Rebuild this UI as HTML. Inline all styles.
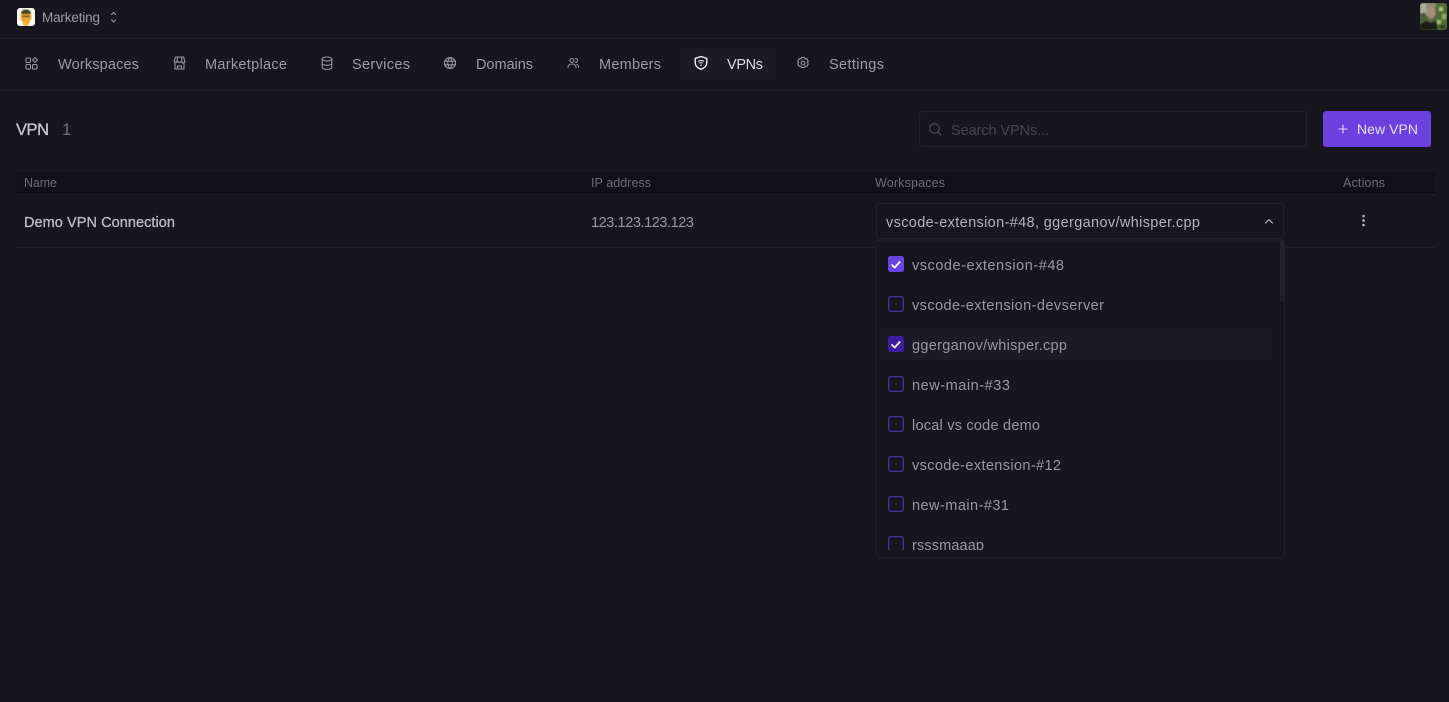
<!DOCTYPE html>
<html lang="en"><head><meta charset="utf-8"><title>VPNs</title>
<style>
html,body{margin:0;padding:0;width:1449px;height:702px;overflow:hidden;background:#17161f}
svg{display:block}
text{font-family:"Liberation Sans",sans-serif}
.nav{font-size:14.500px;fill:#9c9ca2}
.th{font-size:12.500px;fill:#6c6c72}
.it{font-size:14.500px;fill:#98989e}
.ic{fill:none;stroke:#96969c;stroke-width:1.100;stroke-linecap:round;stroke-linejoin:round}
.cb{fill:none;stroke:#4a3299;stroke-width:1.300}
</style></head><body>
<svg width="1449" height="702" viewBox="0 0 1449 702" xmlns="http://www.w3.org/2000/svg">
<defs>
<clipPath id="list"><rect x="877" y="241" width="406" height="309"/></clipPath>
<clipPath id="av"><rect x="1420" y="3" width="27" height="27" rx="3"/></clipPath>
<clipPath id="lg"><rect x="17" y="8" width="18" height="18" rx="3"/></clipPath>
<filter id="b"><feGaussianBlur stdDeviation=".8"/></filter>
<filter id="s"><feGaussianBlur stdDeviation=".4"/></filter>
</defs>
<rect width="1449" height="702" fill="#17161f"/>
<rect y="38" width="1449" height="1" fill="#212029"/>
<rect y="90" width="1449" height="1" fill="#212029"/>

<!-- org logo -->
<g clip-path="url(#lg)">
<rect x="17" y="8" width="18" height="18" fill="#fbfaf5"/>
<g filter="url(#s)">
<ellipse cx="26" cy="17" rx="5.500" ry="6" fill="#e9a62e"/>
<path d="M22 22h8l-2 4h-4z" fill="#eeb23f"/>
<path d="M21 14c0-3 2-4.500 5-4.500s5 1.500 5 4.500z" fill="#3d4a24"/>
<rect x="22.500" y="15.500" width="7" height="1.500" fill="#4a3a1c"/>
</g></g>
<text x="42" y="22" font-size="13.500" fill="#9c9ca2" textLength="58" lengthAdjust="spacing">Marketing</text>
<path class="ic" d="M111.500 14.500L113.500 12.500L115.500 14.500M111.500 20L113.500 22L115.500 20"/>

<!-- avatar -->
<g clip-path="url(#av)">
<rect x="1420" y="3" width="27" height="27" fill="#56683f"/>
<g filter="url(#b)">
<rect x="1420" y="3" width="7" height="12" fill="#a7ab9c"/>
<rect x="1420" y="13" width="6" height="8" fill="#4e5a3c"/>
<rect x="1436" y="3" width="11" height="27" fill="#4f6a30"/>
<rect x="1439" y="7" width="4" height="4" fill="#b1c084"/>
<rect x="1442" y="14" width="4" height="5" fill="#98ad68"/>
<rect x="1437" y="20" width="4" height="4" fill="#a4b57a"/>
<rect x="1440" y="25" width="5" height="4" fill="#2e3d1c"/>
<ellipse cx="1431" cy="12" rx="4.500" ry="7" fill="#a38e78"/>
<rect x="1426" y="3" width="10" height="4" fill="#8d8a78"/>
<path d="M1420 30v-6l6-3 5 2 5-2 2 9z" fill="#1b1d18"/>
</g></g>

<!-- nav icons -->
<g class="ic">
<rect x="26" y="58" width="4.500" height="4.500" rx="1"/><path d="M35 57.500l2.500 2.500-2.500 2.500-2.500-2.500z"/><rect x="26" y="64.500" width="4.500" height="4.500" rx="1"/><rect x="32.500" y="64.500" width="4.500" height="4.500" rx="1"/>
<path d="M175 63v6h9v-6M174 61.500l1.500-4.500h8l1.500 4.500a1.900 1.900 0 0 1-3.700 0 1.900 1.900 0 0 1-3.300 0 1.900 1.900 0 0 1-3.300 0A1.900 1.900 0 0 1 174 61.500zM177.500 57l-.5 4.500M181.500 57l.5 4.500M177.500 69v-3h4v3"/>
<ellipse cx="327" cy="59" rx="4.800" ry="2"/><path d="M322.200 59v8.500c0 1.100 2.200 2 4.800 2s4.800-.9 4.800-2V59M322.200 63.300c0 1.100 2.200 2 4.800 2s4.800-.9 4.800-2"/>
<circle cx="450" cy="63" r="5.500"/><path d="M444.500 61.200h11M444.500 64.800h11M450 57.500c-3 3.500-3 7.500 0 11M450 57.500c3 3.500 3 7.500 0 11"/>
<circle cx="572" cy="60.500" r="2"/><path d="M568 67.500c0-2.200 1.800-3.500 4-3.500s4 1.300 4 3.500M575.500 58.500a2 2 0 0 1 0 4M577 64.300c1 .6 1.500 1.800 1.500 3"/>
<circle cx="803" cy="63" r="1.800"/><path d="M801.500 57.500h3l.6 1.500 1.700-.3 1.500 2.500-1 1.300 1 1.300-1.500 2.500-1.700-.3-.6 1.500h-3l-.6-1.500-1.700.3-1.500-2.500 1-1.300-1-1.300 1.500-2.500 1.700.3z"/>
</g>

<rect x="680" y="48" width="96" height="32" rx="3" fill="#1b1a25"/>
<path d="M701 56.500l5.800 1.900v4.300c0 3.200-2.600 5.300-5.800 6.600-3.200-1.300-5.800-3.400-5.800-6.600v-4.300z" fill="none" stroke="#f0f0f2" stroke-width="1.400" stroke-linejoin="round"/>
<path d="M698 61.500c1.700-1.400 4.300-1.400 6 0M699.400 63.300c1-.7 2.200-.7 3.200 0" fill="none" stroke="#f0f0f2" stroke-width="1"/>
<circle cx="701" cy="65.300" r=".8" fill="#f0f0f2"/>

<text class="nav" x="58" y="69" textLength="81" lengthAdjust="spacing">Workspaces</text>
<text class="nav" x="205" y="69" textLength="82" lengthAdjust="spacing">Marketplace</text>
<text class="nav" x="352" y="69" textLength="58" lengthAdjust="spacing">Services</text>
<text class="nav" x="476" y="69" textLength="57" lengthAdjust="spacing">Domains</text>
<text class="nav" x="599" y="69" textLength="62" lengthAdjust="spacing">Members</text>
<text class="nav" x="727" y="69" textLength="36" lengthAdjust="spacing" style="fill:#dedee2">VPNs</text>
<text class="nav" x="829" y="69" textLength="55" lengthAdjust="spacing">Settings</text>

<!-- title row -->
<text x="16" y="135" font-size="16.500" fill="#c8c8cd" stroke="#c8c8cd" stroke-width=".3" textLength="33" lengthAdjust="spacing">VPN</text>
<text x="62" y="135" font-size="17" fill="#6e6e74">1</text>

<rect x="919.500" y="111.500" width="387" height="35" rx="3" fill="#17161f" stroke="#22212a"/>
<circle cx="934.500" cy="128.500" r="4.800" fill="none" stroke="#505056" stroke-width="1.100"/>
<path d="M938 132l3 3" stroke="#505056" stroke-width="1.100" stroke-linecap="round"/>
<text x="951" y="135" font-size="14.500" fill="#45454b" textLength="98" lengthAdjust="spacing">Search VPNs...</text>

<rect x="1323" y="111" width="108" height="36" rx="3" fill="#6c41e0"/>
<path d="M1343 124.500v9M1338.500 129h9" stroke="#ddd5f7" stroke-width="1.100"/>
<text x="1357" y="134" font-size="14" fill="#e6e0f9" textLength="61" lengthAdjust="spacing">New VPN</text>

<!-- table head -->
<rect x="16" y="172" width="1419" height="22" fill="#111017"/>
<rect x="16" y="194" width="1419" height="1" fill="#22212a"/>
<text class="th" x="24" y="187" textLength="33" lengthAdjust="spacing">Name</text>
<text class="th" x="591" y="187" textLength="60" lengthAdjust="spacing">IP address</text>
<text class="th" x="875" y="187" textLength="70" lengthAdjust="spacing">Workspaces</text>
<text class="th" x="1343" y="187" textLength="42" lengthAdjust="spacing">Actions</text>

<!-- row -->
<text x="24" y="227" font-size="14.500" fill="#bdbdc2" stroke="#bdbdc2" stroke-width=".3" textLength="151" lengthAdjust="spacing">Demo VPN Connection</text>
<text x="591" y="227" font-size="14.500" fill="#98989e" textLength="103" lengthAdjust="spacing">123.123.123.123</text>
<rect x="16" y="247" width="1419" height="1" fill="#22212a"/>
<circle cx="1363.500" cy="216" r="1.300" fill="#b8b8bc"/><circle cx="1363.500" cy="220.500" r="1.300" fill="#b8b8bc"/><circle cx="1363.500" cy="225" r="1.300" fill="#b8b8bc"/>

<!-- select -->
<rect x="876.500" y="203.500" width="407" height="35" rx="2" fill="#17161f" stroke="#22212a"/>
<text x="886" y="227" font-size="14.500" fill="#b4b4b9" textLength="314" lengthAdjust="spacing">vscode-extension-#48, ggerganov/whisper.cpp</text>
<path d="M1265.500 223l3.500-3.500 3.500 3.500" fill="none" stroke="#b4b4b9" stroke-width="1.200" stroke-linecap="round" stroke-linejoin="round"/>

<!-- dropdown -->
<rect x="876" y="240" width="408.500" height="318" rx="4" fill="#17161f" stroke="#212029"/>
<rect x="1280" y="240" width="4" height="61" fill="#22212a"/>
<rect x="880" y="328" width="392" height="32" rx="3" fill="#1b1a25"/>
<g clip-path="url(#list)">
<rect x="888" y="256" width="16" height="16" rx="2.500" fill="#6c41e0"/>
<path d="M891.500 264.500l3.200 3 5.500-6" fill="none" stroke="#fff" stroke-width="1.800"/>
<text class="it" x="912" y="270" textLength="152" lengthAdjust="spacing">vscode-extension-#48</text>
<rect class="cb" x="888.650" y="296.650" width="14.700" height="14.700" rx="2.500"/>
<text class="it" x="912" y="310" textLength="192" lengthAdjust="spacing">vscode-extension-devserver</text>
<rect x="888" y="336" width="16" height="16" rx="2.500" fill="#3c1ea0"/>
<path d="M891.500 344.500l3.200 3 5.500-6" fill="none" stroke="#fff" stroke-width="1.800"/>
<text class="it" x="912" y="350" textLength="155" lengthAdjust="spacing">ggerganov/whisper.cpp</text>
<rect class="cb" x="888.650" y="376.650" width="14.700" height="14.700" rx="2.500"/>
<text class="it" x="912" y="390" textLength="98" lengthAdjust="spacing">new-main-#33</text>
<rect class="cb" x="888.650" y="416.650" width="14.700" height="14.700" rx="2.500"/>
<text class="it" x="912" y="430" textLength="128" lengthAdjust="spacing">local vs code demo</text>
<rect class="cb" x="888.650" y="456.650" width="14.700" height="14.700" rx="2.500"/>
<text class="it" x="912" y="470" textLength="149" lengthAdjust="spacing">vscode-extension-#12</text>
<rect class="cb" x="888.650" y="496.650" width="14.700" height="14.700" rx="2.500"/>
<text class="it" x="912" y="510" textLength="97" lengthAdjust="spacing">new-main-#31</text>
<rect class="cb" x="888.650" y="536.650" width="14.700" height="14.700" rx="2.500"/>
<text class="it" x="912" y="550" textLength="72" lengthAdjust="spacing">rsssmaaap</text>
</g>
</svg>
</body></html>
